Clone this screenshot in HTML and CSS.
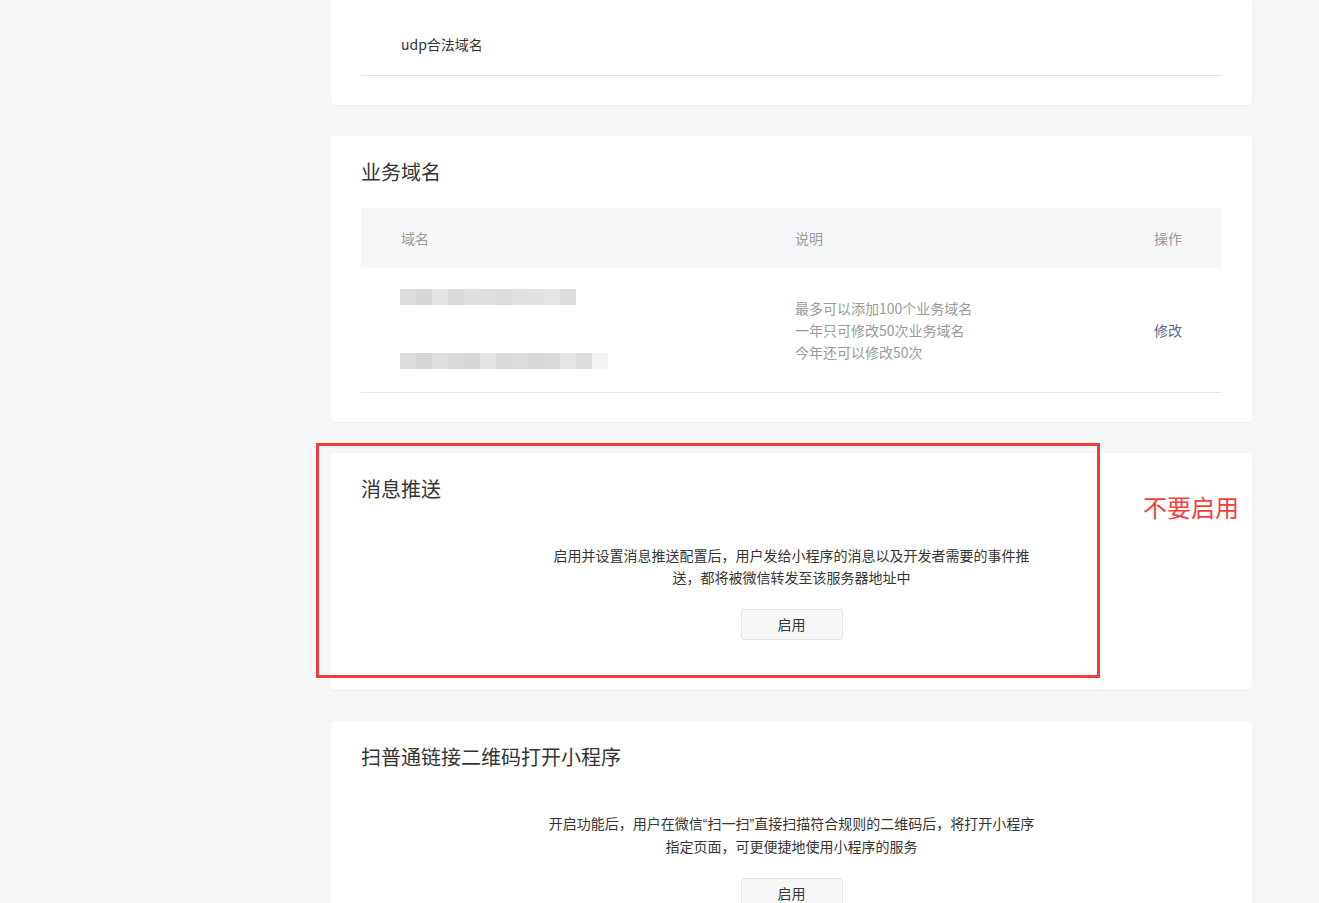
FILE: index.html
```html
<!DOCTYPE html>
<html lang="zh-CN">
<head>
<meta charset="utf-8">
<title>开发设置</title>
<link rel="stylesheet" href="styles.css">
</head>
<body>
<div class="page">
  <main class="main">
    <section class="card card--clipped">
      <div class="simple-row">udp合法域名</div>
    </section>

    <section class="card card--table">
      <h2 class="card-title">业务域名</h2>
      <div class="table">
        <div class="table-head">
          <div>域名</div>
          <div>说明</div>
          <div class="col-op">操作</div>
        </div>
        <div class="table-row">
          <div class="domains">
            <div class="mosaic mosaic--a"></div>
            <div class="mosaic mosaic--b"></div>
          </div>
          <div class="desc-list">
            <div>最多可以添加100个业务域名</div>
            <div>一年只可修改50次业务域名</div>
            <div>今年还可以修改50次</div>
          </div>
          <div class="col-op"><a class="link">修改</a></div>
        </div>
      </div>
    </section>

    <section class="card card--marked">
      <h2 class="card-title">消息推送</h2>
      <p class="feature-desc">启用并设置消息推送配置后，用户发给小程序的消息以及开发者需要的事件推<br>送，都将被微信转发至该服务器地址中</p>
      <div class="btn-wrap"><button class="btn">启用</button></div>
      <div class="warn-box"></div>
      <div class="warn-text">不要启用</div>
    </section>

    <section class="card">
      <h2 class="card-title">扫普通链接二维码打开小程序</h2>
      <p class="feature-desc">开启功能后，用户在微信<span class="q">“</span>扫一扫<span class="q">”</span>直接扫描符合规则的二维码后，将打开小程序<br>指定页面，可更便捷地使用小程序的服务</p>
      <div class="btn-wrap"><button class="btn">启用</button></div>
    </section>
  </main>
</div>
</body>
</html>
```

FILE: styles.css
```css
* { box-sizing: border-box; }

html, body {
  margin: 0;
  padding: 0;
  background: #f6f7f9;
  font-family: "Noto Sans CJK SC", "Noto Sans", sans-serif;
  color: #353535;
}

.page {
  padding-left: 331px;
  height: 903px;
  overflow: hidden;
}

.main {
  width: 921px;
  display: flex;
  flex-direction: column;
  gap: 31px;
  padding-bottom: 40px;
}

.card {
  background: #fff;
  border-radius: 4px;
  box-shadow: 0 1px 2px rgba(0, 0, 0, 0.06);
  padding: 24px 30px 30px;
}

.card--clipped {
  border-radius: 0 0 4px 4px;
  padding-top: 0;
  padding-bottom: 29px;
}

.card--table { padding-bottom: 29px; }

.simple-row {
  padding: 33px 40px 20px;
  line-height: 22px;
  font-size: 14px;
  border-bottom: 1px solid #e7e7eb;
}

.card-title {
  margin: 0;
  font-size: 20px;
  line-height: 24px;
  font-weight: normal;
  color: #353535;
}

.table {
  margin-top: 24px;
  font-size: 14px;
}

.table-head,
.table-row {
  display: grid;
  grid-template-columns: 394px 1fr auto;
  padding: 0 40px;
  align-items: center;
}

.table-head {
  height: 60px;
  background: #f6f7f9;
  color: #9a9a9a;
}

.table-row {
  height: 125px;
  border-bottom: 1px solid #e7e7eb;
}

.col-op { text-align: right; }

.domains {
  display: flex;
  flex-direction: column;
  gap: 48px;
  padding-bottom: 2px;
  margin-left: -1px;
}

.mosaic { height: 16px; }

.mosaic--a {
  width: 176px;
  background: linear-gradient(90deg,
    #dcdcdc 0 16px, #d6d6d6 16px 32px, #e3e3e3 32px 48px, #dadada 48px 64px,
    #dfdfdf 64px 80px, #dedede 80px 96px, #dbdbdb 96px 112px, #e0e0e0 112px 128px,
    #e1e1e1 128px 144px, #e5e5e5 144px 160px, #dcdcdc 160px 176px);
}

.mosaic--b {
  width: 208px;
  background: linear-gradient(90deg,
    #dcdcdc 0 16px, #d5d5d5 16px 32px, #dedede 32px 48px, #dadada 48px 64px,
    #d6d6d6 64px 80px, #e3e3e3 80px 96px, #dadada 96px 112px, #dbdbdb 112px 128px,
    #d7d7d7 128px 144px, #dadada 144px 160px, #e4e4e4 160px 176px, #dcdcdc 176px 192px,
    #f4f4f4 192px 208px);
}

.desc-list {
  color: #9a9a9a;
  line-height: 22px;
}

.link {
  color: #576b95;
  text-decoration: none;
  cursor: pointer;
}

.feature-desc {
  margin: 43px 0 0;
  font-size: 14px;
  line-height: 22px;
  text-align: center;
  color: #353535;
}

.q {
  font-family: "Liberation Sans", sans-serif;
}

.btn-wrap {
  margin-top: 21px;
  display: flex;
  justify-content: center;
}

.btn {
  width: 102px;
  height: 31px;
  border: 1px solid #e4e4e4;
  border-radius: 3px;
  background: #f8f8f8;
  color: #353535;
  font-family: inherit;
  font-size: 14px;
  line-height: 29px;
  padding: 0;
}

.card--marked {
  position: relative;
  padding-bottom: 50px;
}

.warn-box {
  position: absolute;
  left: -15px;
  top: -10px;
  width: 784px;
  height: 235px;
  border: 3px solid #f23b3b;
}

.warn-text {
  position: absolute;
  left: 812px;
  top: 39px;
  font-size: 24px;
  line-height: 30px;
  color: #f43f3f;
  white-space: nowrap;
}
```
